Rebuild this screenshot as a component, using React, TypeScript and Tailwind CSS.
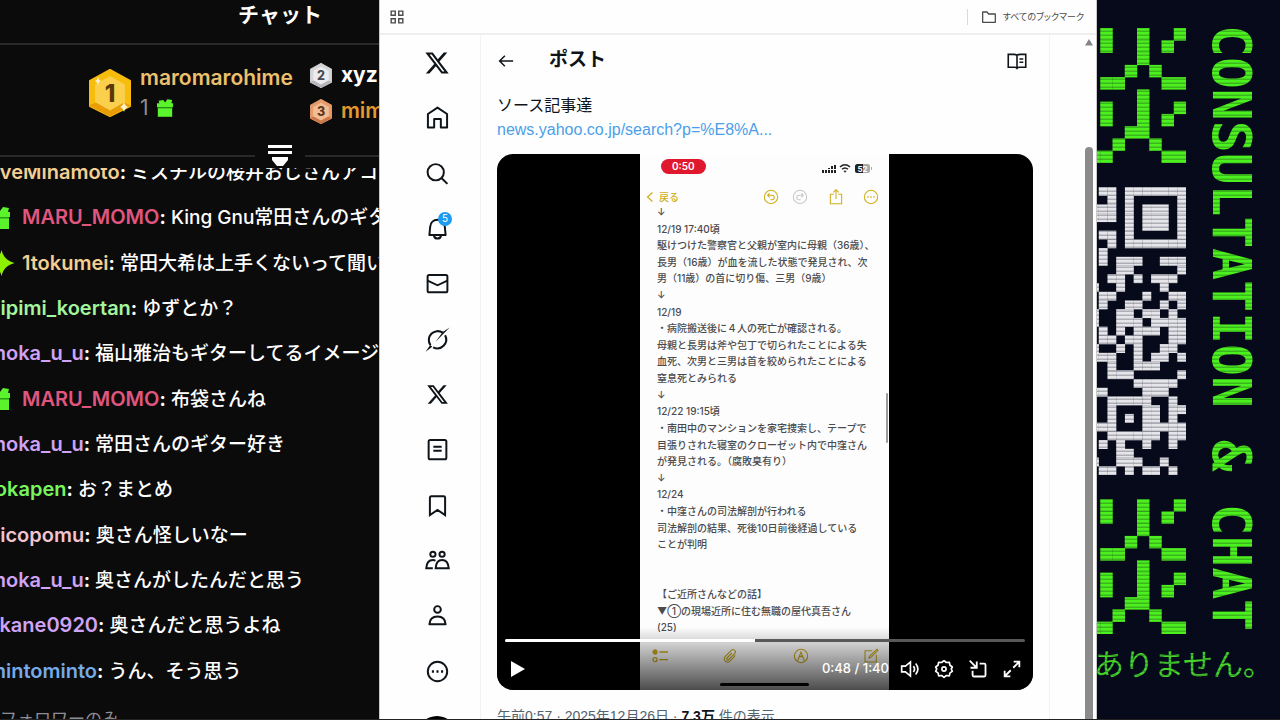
import type { ReactNode } from 'react';

const UI_FONT = "font-['Inter','Noto_Sans_CJK_JP',sans-serif]";
const POST_FONT = "font-['Liberation_Sans','Noto_Sans_CJK_JP',sans-serif]";

interface Message {
  name: string;
  color: string;
  text: string;
  badge?: 'gift' | 'spark';
}

const MESSAGES: Message[] = [
  { name: 'MARU_MOMO', color: 'text-[#e0567f]', text: 'King Gnu常田さんのギタ', badge: 'gift' },
  { name: '1tokumei', color: 'text-[#f3cf92]', text: '常田大希は上手くないって聞い', badge: 'spark' },
  { name: 'pipimi_koertan', color: 'text-[#a5f59b]', text: 'ゆずとか？' },
  { name: 'moka_u_u', color: 'text-[#cfa3f5]', text: '福山雅治もギターしてるイメージ' },
  { name: 'MARU_MOMO', color: 'text-[#e0567f]', text: '布袋さんね', badge: 'gift' },
  { name: 'moka_u_u', color: 'text-[#cfa3f5]', text: '常田さんのギター好き' },
  { name: 'tokapen', color: 'text-[#79f45c]', text: 'お？まとめ' },
  { name: 'nicopomu', color: 'text-[#f2c4cf]', text: '奥さん怪しいなー' },
  { name: 'moka_u_u', color: 'text-[#cfa3f5]', text: '奥さんがしたんだと思う' },
  { name: 'akane0920', color: 'text-[#cfa3f5]', text: '奥さんだと思うよね' },
  { name: 'mintominto', color: 'text-[#76a9e8]', text: 'うん、そう思う' },
];

const NOTE_LINES = [
  '↓',
  '12/19 17:40頃',
  '駆けつけた警察官と父親が室内に母親（36歳）、',
  '長男（16歳）が血を流した状態で発見され、次',
  '男（11歳）の首に切り傷、三男（9歳）',
  '↓',
  '12/19',
  '・病院搬送後に４人の死亡が確認される。',
  '母親と長男は斧や包丁で切られたことによる失',
  '血死、次男と三男は首を絞められたことによる',
  '窒息死とみられる',
  '↓',
  '12/22 19:15頃',
  '・南田中のマンションを家宅捜索し、テープで',
  '目張りされた寝室のクローゼット内で中窪さん',
  'が発見される。（腐敗臭有り）',
  '↓',
  '12/24',
  '・中窪さんの司法解剖が行われる',
  '司法解剖の結果、死後10日前後経過している',
  'ことが判明',
  '',
  '',
  '【ご近所さんなどの話】',
  '▼①の現場近所に住む無職の屋代真吾さん',
  '(25)',
];

const FLAME = [
  '.#..#..#',
  '.#..#.#.',
  '....#...',
  '...#.#..',
  '.##...##',
  '....#...',
  '.#..#..#',
  '.#..#.#.',
  '...##...',
  '..#..#..',
  '##....##',
];

const CODE = [
  '.##.#######',
  '..#.#.....#',
  '###.#.###.#',
  '###.#.###.#',
  '....#.###.#',
  '.##.#.....#',
  '..#.#######',
  '.#.........',
  '.#.###..###',
  '...##.....#',
  '..##.#.###.',
  '#..#....#..',
  '.##...#..##',
  '.#..##..#.#',
  '#..##.##.#.',
  '#..###.####',
  '.#.#.###.##',
  '.##.##...##',
  '#..#.#..##.',
  '###..#.##.#',
  '..#..###...',
  '..###.....#',
  '.....#####.',
  '##....###..',
  '..#####..#.',
  '..#...##.##',
  '..#.#.##.#.',
  '###...#####',
  '..######.##',
  '.#.#..#..#.',
  '...##......',
  '#..###..#..',
  '.##.#.##.#.',
];

const X_PATH =
  'M18.244 2.25h3.308l-7.227 8.26 8.502 11.24H16.17l-5.214-6.817L4.99 21.75H1.68l7.73-8.835L1.254 2.25H8.08l4.713 6.231zm-1.161 17.52h1.833L7.084 4.126H5.117z';

function Bitmap({ rows, className }: { rows: string[]; className: string }) {
  const cells = rows.flatMap((row, y) =>
    [...row].map((c, x) =>
      c === '#' ? <rect key={`${x}-${y}`} x={x} y={y} width="1.02" height="1.02" /> : null
    )
  );
  return (
    <svg viewBox={`0 0 ${rows[0].length} ${rows.length}`} className={className} fill="currentColor" aria-hidden="true">
      {cells}
    </svg>
  );
}

function Line({ children, className = 'size-[25px]', width = 1.9 }: { children: ReactNode; className?: string; width?: number }) {
  return (
    <svg viewBox="0 0 24 24" className={className} fill="none" stroke="currentColor" strokeWidth={width} aria-hidden="true">
      {children}
    </svg>
  );
}

function Gift({ className }: { className: string }) {
  return (
    <svg viewBox="0 0 20 22" className={className} fill="#5bf32b" aria-hidden="true">
      <path d="M2 2l6-1 2 3 3-4 6 1-1 4h2v5H0V5h3z" />
      <path d="M1 11h18v11H1z" />
      <path d="M1 10h18v1.500H1z" fill="#2c9c18" />
    </svg>
  );
}

function Spark() {
  return (
    <svg viewBox="0 0 24 24" className="h-[26px] w-[27px] shrink-0" aria-hidden="true">
      <path d="M12 0c1.500 6 5 10 12 12-7 2-10.500 6-12 12-1.500-6-5-10-12-12 7-2 10.500-6 12-12z" fill="#8df000" />
    </svg>
  );
}

function Medal({ rank, className }: { rank: 1 | 2 | 3; className: string }) {
  const [edge, face, shade, ink] = {
    1: ['#f8bd0c', '#f9cf4b', '#e89c06', '#5a3708'],
    2: ['#d5d5d8', '#ececee', '#b5b5ba', '#4c4c50'],
    3: ['#e89b6a', '#f3bd96', '#c97845', '#5e3620'],
  }[rank];
  return (
    <svg viewBox="0 0 44 48" className={className} role="img" aria-label={`Rank ${rank}`}>
      <path d="M22 1l20 11v25L22 47 2 37V12z" fill={edge} stroke={edge} strokeWidth="2" strokeLinejoin="round" />
      <path d="M2 36l20-8 20 8v1L22 47.500 2 37z" fill={shade} />
      <path d="M22 7l15 8.500v17.500L22 41.500 7 33V15.500z" fill={face} />
      {rank === 1 && <path d="M36 33q1 4 4 5-3 1-4 5-1-4-4-5 3-1 4-5zM10 8q.6 3 3 4-2.400.7-3 4-.6-3-3-4 2.400-1 3-4z" fill="#fff3cf" />}
      <text x="22" y="33" textAnchor="middle" fontFamily="Inter" fontWeight="800" fontSize="24" fill={ink}>
        {rank}
      </text>
    </svg>
  );
}

function ChatPanel() {
  return (
    <aside className="flex w-[379px] shrink-0 flex-col overflow-hidden bg-[#0b0b0c] text-white">
      <header className="flex h-[45px] shrink-0 items-start justify-center border-b-2 border-[#29292c] pl-[181px]">
        <h1 className="text-[21px] leading-[30px] font-bold">チャット</h1>
      </header>

      <section className="flex h-[109px] shrink-0 items-start gap-4 pt-[18px] pl-[88px] font-semibold whitespace-nowrap" aria-label="Gift ranking">
        <div className="flex shrink-0 items-center gap-2">
          <Medal rank={1} className="h-[52px] w-11" />
          <div className="text-[21px] leading-[30px]">
            <p className="text-[#ecc06c]">maromarohime</p>
            <p className="flex items-center gap-2 font-normal text-[#8d8d95]">
              1 <Gift className="h-[18px] w-4" />
            </p>
          </div>
        </div>
        <ul className="shrink-0 text-[21px]">
          <li className="flex h-[36px] items-start gap-2">
            <Medal rank={2} className="h-[25px] w-6" />
            <span className="leading-6 font-bold">xyz</span>
          </li>
          <li className="flex h-[36px] items-start gap-2 text-[#e29a2d]">
            <Medal rank={3} className="h-[25px] w-6" />
            <span className="leading-6">mim</span>
          </li>
        </ul>
      </section>

      <div className="z-10 -mb-[6px] flex h-[20px] shrink-0 items-start" aria-hidden="true">
        <span className="mt-px h-[2px] w-[255px] bg-[#29292c]" />
        <svg viewBox="0 0 50 22" className="-mt-[10px] h-[22px] w-[50px] shrink-0" fill="#fff">
          <path d="M13 1h24v3H13zM13 7h24v3H13zM17 13h16v3l-5 6h-6l-5-6z" />
        </svg>
        <span className="mt-px h-[2px] flex-1 bg-[#29292c]" />
      </div>

      <div className="-ml-3 flex h-[27px] shrink-0 items-end overflow-hidden pb-[9px]">
        <p className="text-[19px] leading-[26px] font-medium whitespace-nowrap">
          <b className="text-xl font-semibold text-[#f3cf92]">oveMinamoto</b>
          <b>:</b> ミスチルの桜井おじさんアコ
        </p>
      </div>
      <ol className="-ml-3 flex min-h-0 flex-1 flex-col">
        {MESSAGES.map((m, i) => (
          <li key={i} className="flex flex-1 items-center whitespace-nowrap">
            {m.badge && (
              <span className="flex w-[34px] shrink-0 items-center">
                {m.badge === 'gift' ? <Gift className="h-[22px] w-6" /> : <Spark />}
              </span>
            )}
            <p className="text-[19px] leading-7 font-medium">
              <b className={`text-xl font-semibold ${m.color}`}>{m.name}</b>
              <b>:</b> {m.text}
            </p>
          </li>
        ))}
      </ol>
      <p className="h-[25px] shrink-0 pt-[11px] text-[17px] leading-7 whitespace-nowrap text-[#8d8d95]">フォロワーのみ</p>
    </aside>
  );
}

const NAV: { label: string; icon: ReactNode }[] = [
  {
    label: 'X',
    icon: (
      <svg viewBox="0 0 24 24" className="size-[26px]" fill="currentColor" aria-hidden="true">
        <path d={X_PATH} />
      </svg>
    ),
  },
  { label: 'Home', icon: <Line><path d="M2.800 8.600L12 2.500l9.200 6.100V21.500h-6v-8H8.800v8h-6z" strokeLinejoin="round" /></Line> },
  { label: 'Explore', icon: <Line><circle cx="10.300" cy="10.800" r="7.800" /><path d="M15.800 16.300l5.700 5.700" /></Line> },
  {
    label: 'Notifications',
    icon: (
      <>
        <Line>
          <path d="M12 3.500c-4 0-6.700 3-7 6.700L4.200 18.300h15.600L19 10.200c-.3-3.700-3-6.700-7-6.700z" strokeLinejoin="round" />
          <path d="M8.500 18.500c.3 2 1.700 3.200 3.500 3.200s3.200-1.200 3.500-3.200" />
        </Line>
        <span className="absolute -top-[2px] right-0 flex size-[14px] items-center justify-center rounded-full bg-[#1d9bf0] text-[10px] text-white">
          5
        </span>
      </>
    ),
  },
  { label: 'Messages', icon: <Line><rect x="2.500" y="3.800" width="19" height="16.700" rx="1.500" /><path d="M2.500 9.200l9.500 4.500 9.500-4.500" /></Line> },
  {
    label: 'Grok',
    icon: (
      <Line width={2}>
        <path d="M5.300 17.500a8.500 8.500 0 0 1 11.700-12M19.300 8a8.500 8.500 0 0 1-11.500 11.500" />
        <path d="M.6 23.800L5 17.300l2 1.700zM23.600.4L10 14.500l7-9.800z" fill="currentColor" stroke="none" />
      </Line>
    ),
  },
  {
    label: 'Premium',
    icon: (
      <svg viewBox="0 0 24 24" className="size-[23px]" fill="currentColor" aria-hidden="true">
        <path d={X_PATH} />
      </svg>
    ),
  },
  { label: 'Articles', icon: <Line><rect x="3.500" y="2.800" width="17" height="18.500" rx="1.500" /><path d="M8 9.300h8M8 13.200h8" /></Line> },
  { label: 'Bookmarks', icon: <Line><path d="M4.700 4.500c0-.8.500-1.300 1.300-1.300h12c.8 0 1.300.5 1.300 1.300v16.700L12 16.300l-7.300 4.900z" /></Line> },
  {
    label: 'Communities',
    icon: (
      <Line>
        <circle cx="7.600" cy="6" r="2.500" />
        <circle cx="16.400" cy="6" r="2.500" />
        <path d="M10 12.200c-.7-.5-1.500-.7-2.400-.7C4 11.500 1.500 14.200 1.200 19.500h6.300M10.200 19.500c.3-5 2.800-8 6.200-8s6 3 6.400 8z" />
      </Line>
    ),
  },
  { label: 'Profile', icon: <Line><circle cx="12" cy="6.200" r="3.200" /><path d="M4.200 20.500c.3-4.800 3.300-7.500 7.800-7.500s7.500 2.700 7.800 7.500z" strokeLinejoin="round" /></Line> },
  {
    label: 'More',
    icon: (
      <Line>
        <circle cx="12" cy="12" r="9.300" />
        <path d="M6.600 12h2M11 12h2M15.400 12h2" strokeWidth="2.200" />
      </Line>
    ),
  },
];

function SideNav() {
  return (
    <nav className="flex w-[101px] shrink-0 flex-col overflow-hidden border-r border-[#f0f2f3] pl-[14px] text-[#0f1419]">
      <ul className="flex min-h-0 flex-1 flex-col">
        {NAV.map((item) => (
          <li key={item.label} className="flex flex-1 items-center justify-center">
            <button aria-label={item.label} className="relative flex size-[30px] items-center justify-center">
              {item.icon}
            </button>
          </li>
        ))}
      </ul>
      <div className="flex h-[20px] shrink-0 items-start justify-center pt-[17px]">
        <button aria-label="Post" className="size-[40px] shrink-0 rounded-full bg-black" />
      </div>
    </nav>
  );
}

const GOLD_ICON = 'size-4';

function PhoneScreen() {
  return (
    <div className="relative flex h-full w-[249px] flex-col bg-[#fdfdfd] text-[#4b4b4d]">
      <div className="flex h-[28px] shrink-0 items-center justify-between pr-4 pl-[21px]">
        <span className="mb-1 rounded-full bg-[#e0182d] px-[11px] text-[10px] leading-[15px] font-semibold text-white">0:50</span>
        <svg viewBox="0 0 52 12" className="h-3 w-[52px]" fill="#222" aria-hidden="true">
          <path d="M1 8h2v3H1zM4 7h2v4H4zM7 6h2v5H7zM10 4h2v7h-2zM13 3h2v8h-2z" />
          <path d="M1 7.500h14" stroke="#fdfdfd" />
          <path d="M19 5q5-4.500 10 0M21 7.300q3-2.600 6 0" fill="none" stroke="#222" strokeWidth="1.500" />
          <path d="M22.500 9L24 10.700 25.500 9q-1.500-1.200-3 0z" />
          <rect x="34" y="2" width="15" height="9" rx="2.500" fill="#aaa" />
          <path d="M36.500 2H42v9h-5.500A2.500 2.500 0 0 1 34 8.500v-4A2.500 2.500 0 0 1 36.500 2z" />
          <path d="M50 5h1v3h-1z" fill="#aaa" />
          <text x="41.500" y="9.500" textAnchor="middle" fontFamily="Inter" fontWeight="700" fontSize="8" fill="#fff">52</text>
        </svg>
      </div>
      <div className="flex h-[22px] shrink-0 items-center pt-[8px] pr-[10px] pl-[5px] text-[#d0b01c]">
        <Line className="h-4 w-[10px]" width={3}><path d="M18 1L6 12l12 11" /></Line>
        <span className="ml-1 flex-1 text-[10px] font-medium">戻る</span>
        <div className="flex items-center gap-[13px]">
          <Line className={GOLD_ICON} width={1.6}><circle cx="12" cy="12" r="10" /><path d="M10 6.500L7 9.500l3 3M7 9.500h6.500a3.300 3.300 0 0 1 0 6.600H11" /></Line>
          <Line className="size-4 text-[#c9c9c9]" width={1.6}><circle cx="12" cy="12" r="10" /><path d="M14 6.500l3 3-3 3M17 9.500h-6.500a3.300 3.300 0 0 0 0 6.600H13" /></Line>
          <div className="flex items-center gap-[19px] pl-[7px]">
            <Line className={GOLD_ICON} width={1.6}><path d="M8.500 8H3.500v14h17V8h-5M12 15V1.500M8 5l4-4 4 4" /></Line>
            <Line className={GOLD_ICON} width={1.6}><circle cx="12" cy="12" r="10" /><path d="M6.500 12h2M11 12h2M15.500 12h2" strokeWidth="2.200" /></Line>
          </div>
        </div>
      </div>
      <div className="flex min-h-0 flex-1 flex-col pl-[17px] text-[10px] leading-4 font-medium">
        {NOTE_LINES.map((line, i) => (
          <p key={i} className="flex-1 whitespace-nowrap">{line}</p>
        ))}
      </div>
      <div className="flex h-[54px] shrink-0 flex-col items-center text-[#c8a91c]">
        <div className="flex w-full justify-between pt-[12px] pr-[10px] pl-3">
          <Line className={GOLD_ICON}>
            <circle cx="4.500" cy="6" r="3" fill="currentColor" />
            <circle cx="4.500" cy="17.500" r="3" />
            <path d="M11 6h13M11 17.500h13" />
          </Line>
          <Line className={GOLD_ICON} width={1.6}><path d="M20 11l-8.500 9a5 5 0 0 1-7-7L14 3.500a3.400 3.400 0 0 1 5 5l-9 9a1.700 1.700 0 0 1-2.500-2.500L15 7.500" /></Line>
          <Line className={GOLD_ICON} width={1.6}><circle cx="12" cy="12" r="10" /><path d="M7 19l5-13 5 13M9.500 14l2.500-2 2.500 2" /></Line>
          <Line className={GOLD_ICON} width={1.6}><path d="M14 4H3v17h17V10M9 15l1-3L21 2l1.500 1.500L12 14z" /></Line>
        </div>
        <div className="mt-[19px] h-[3px] w-[89px] rounded-full bg-black" />
      </div>
      <span className="absolute top-[239px] right-[1px] h-[50px] w-[2px] rounded-full bg-[#9b9b9b]" />
    </div>
  );
}

function PlayerControls() {
  return (
    <div className="absolute inset-x-0 bottom-0 bg-linear-to-t from-black/70 to-transparent px-2 pt-3 text-white">
      <progress
        value={48}
        max={100}
        aria-label="Playback position"
        className="block h-[3px] w-full appearance-none overflow-hidden rounded-full [&::-webkit-progress-bar]:bg-[#585858] [&::-webkit-progress-value]:bg-white"
      />
      <div className="flex h-[48px] items-center pt-[9px] pb-1 pl-[5px]">
        <button aria-label="Play">
          <svg viewBox="0 0 16 18" className="h-[18px] w-4" fill="currentColor" aria-hidden="true"><path d="M1 1l14 8-14 8z" /></svg>
        </button>
        <span className="ml-auto text-[13px] font-medium">0:48 / 1:40</span>
        <div className="flex items-center gap-[14px] pr-[3px] pl-[11px]">
          <button aria-label="Mute">
            <Line className="size-5" width={2}><path d="M2 8.500h4.500L12.500 3.500v17L6.500 15.500H2zM16 8.500q3 3.500 0 7M18.800 5.500q5.400 6.500 0 13" /></Line>
          </button>
          <button aria-label="Settings">
            <Line className="size-5" width={2}>
              <path d="M12 2l2.800 2.200 3.600-.3.800 3.600 2.800 2.100-1.300 2.400 1.300 2.800-2.800 1.900-.8 3.500-3.600-.4L12 22l-2.800-2.200-3.600.4-.8-3.500L2 14.800 3.300 12 2 9.600l2.800-2.100.8-3.600 3.600.3z" strokeLinejoin="round" />
              <circle cx="12" cy="12" r="2.500" />
            </Line>
          </button>
          <button aria-label="Picture in picture">
            <Line className="size-5" width={2.2}><path d="M2 2l8 8M10.500 3v7.500H3M14 5.500h5.500q1.500 0 1.500 1.500v12.500q0 1.500-1.500 1.500H7q-1.500 0-1.500-1.500V14" /></Line>
          </button>
          <button aria-label="Full screen">
            <Line className="size-5" width={2.2}><path d="M13.500 10.500L21 3M14 3.200h6.800V10M10.500 13.500L3 21M3.200 14v6.800H10" /></Line>
          </button>
        </div>
      </div>
    </div>
  );
}

function Post() {
  return (
    <main className="flex min-w-0 flex-1 flex-col border-r border-[#f0f2f3] px-4 text-[#0f1419]">
      <header className="flex h-[51px] shrink-0 items-center">
        <button aria-label="Back" className="w-[52px] shrink-0">
          <Line className="size-[18px]" width={2}><path d="M21.500 12H4M10.500 5L3.500 12l7 7" /></Line>
        </button>
        <h2 className="flex-1 text-[19px] font-bold">ポスト</h2>
        <button aria-label="Reader mode" className="mr-[6px]">
          <Line className="size-5" width={1.9}><path d="M12 5v17M12 5c-1-.8-2-1-4-1H1.500v15.500H9c1.500 0 2.500.3 3 1 .5-.7 1.500-1 3-1h7.500V4H16c-2 0-3 .2-4 1zM15 9.500h4.500M15 13.500h4.500" /></Line>
        </button>
      </header>
      <div className={`pt-[8px] text-base leading-6 ${POST_FONT}`}>
        <p>ソース記事達</p>
        <a href="#news" className="text-[#4c9fe9]">news.yahoo.co.jp/search?p=%E8%A...</a>
      </div>
      <div className="relative mt-3 flex aspect-square w-full shrink-0 justify-center overflow-hidden rounded-2xl bg-black pr-[1px]">
        <PhoneScreen />
        <PlayerControls />
      </div>
      <p className={`mt-[14px] text-sm leading-6 whitespace-nowrap text-[#536471] ${POST_FONT}`}>
        午前0:57 · 2025年12月26日 · <b className="text-[#0f1419]">7.3万</b> 件の表示
      </p>
    </main>
  );
}

function Browser() {
  return (
    <div className="flex min-w-0 flex-1 flex-col overflow-hidden border-x border-[#c9c9c9] bg-[#fefefe]">
      <div className="flex h-[35px] shrink-0 items-center justify-between border-b-2 border-[#efefed] pr-[12px] pl-[10px]">
        <button aria-label="Apps">
          <Line className="size-[14px] text-[#4b4b4d]" width={2.4}>
            <path d="M2 2h7v7H2zM15 2h7v7h-7zM2 15h7v7H2zM15 15h7v7h-7z" />
          </Line>
        </button>
        <button className="flex items-center gap-[6px] border-l border-[#d3dbea] pl-[13px] text-[9px] leading-[14px] text-[#4b4b4d] [font-feature-settings:'palt']">
          <Line className="size-4" width={1.9}><path d="M2.500 4.500h6.500l2.500 3h10v12.500h-19z" strokeLinejoin="round" /></Line>
          すべてのブックマーク
        </button>
      </div>
      <div className="flex min-h-0 flex-1">
        <SideNav />
        <Post />
        <div className="flex w-[46px] shrink-0 flex-col items-end pt-[4px] pr-[3px]" aria-hidden="true">
          <svg viewBox="0 0 8 7" className="h-[7px] w-2" fill="#858585"><path d="M4 0l4 6.500H0z" /></svg>
          <div className="mt-[101px] w-2 flex-1 rounded-t-full bg-[#8b8b8b]" />
        </div>
      </div>
    </div>
  );
}

function Banner() {
  return (
    <aside className="relative flex w-[183px] shrink-0 flex-col overflow-hidden bg-[#060a1a] text-[#4df01f]">
      <div className="flex shrink-0 pt-[28px]">
        <div className="flex w-[89px] shrink-0 flex-col items-end overflow-hidden">
          <Bitmap rows={FLAME} className="h-[135px] w-[98px] shrink-0" />
          <Bitmap rows={CODE} className="my-6 h-[288px] w-24 shrink-0 text-[#e6e6ea]" />
          <Bitmap rows={FLAME} className="h-[135px] w-[98px] shrink-0" />
        </div>
        <p className="-mt-[3px] ml-[13px] h-[610px] font-['DejaVu_Sans_Mono',monospace] text-[53px] leading-[64px] font-bold whitespace-nowrap [writing-mode:vertical-rl]">
          CONSULTATION &amp; CHAT
        </p>
      </div>
      <p className="mt-[7px] -ml-[3px] text-[30px] leading-[44px] font-normal whitespace-nowrap text-[#46d42a]">ありません。</p>
      <div className="pointer-events-none absolute inset-0 bg-[repeating-linear-gradient(to_bottom,transparent_0px,transparent_2px,rgba(4,8,24,0.25)_3px,rgba(4,8,24,0.25)_4px)]" />
    </aside>
  );
}

export default function App() {
  return (
    <div className={`flex h-screen w-full overflow-hidden border-b border-[#222] bg-[#0b0b0c] ${UI_FONT}`} lang="ja">
      <ChatPanel />
      <Browser />
      <Banner />
    </div>
  );
}
